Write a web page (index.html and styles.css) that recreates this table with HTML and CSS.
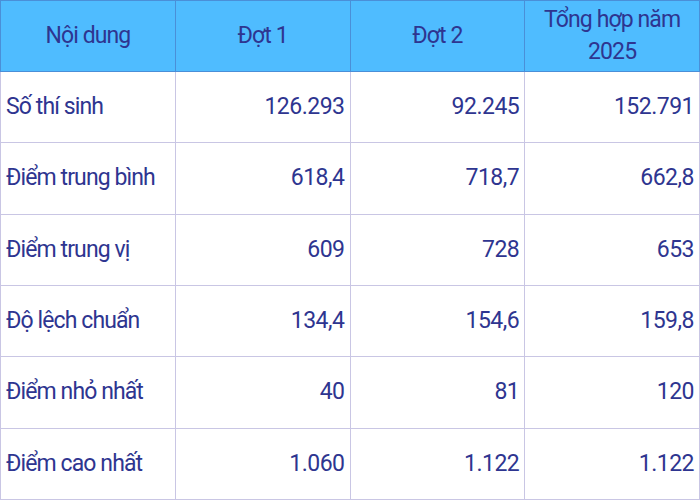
FILE: index.html
```html
<!DOCTYPE html>
<html lang="vi">
<head>
<meta charset="utf-8">
<link rel="stylesheet" href="styles.css">
</head>
<body>
<table class="stats">
  <thead>
    <tr>
      <th>Nội dung</th>
      <th>Đợt 1</th>
      <th>Đợt 2</th>
      <th>Tổng hợp năm<br>2025</th>
    </tr>
  </thead>
  <tbody>
    <tr><td>Số thí sinh</td><td>126.293</td><td>92.245</td><td>152.791</td></tr>
    <tr><td>Điểm trung bình</td><td>618,4</td><td>718,7</td><td>662,8</td></tr>
    <tr><td>Điểm trung vị</td><td>609</td><td>728</td><td>653</td></tr>
    <tr><td>Độ lệch chuẩn</td><td>134,4</td><td>154,6</td><td>159,8</td></tr>
    <tr><td>Điểm nhỏ nhất</td><td>40</td><td>81</td><td>120</td></tr>
    <tr><td>Điểm cao nhất</td><td>1.060</td><td>1.122</td><td>1.122</td></tr>
  </tbody>
</table>
</body>
</html>
```
FILE: styles.css
```css
html, body {
  margin: 0;
  padding: 0;
  background: #ffffff;
}
.stats {
  width: 700px;
  height: 500px;
  border-collapse: collapse;
  table-layout: fixed;
  font-family: Roboto, "Liberation Sans", sans-serif;
  font-size: 23px;
  letter-spacing: -0.9px;
  color: #2e3590;
}
.stats th, .stats td {
  border: 1px solid #c9c6e4;
  padding: 0 5px;
  height: 70px;
  line-height: 30px;
}
.stats th {
  background: #4fbcff;
  border-color: #4a8fd8;
  font-weight: 400;
  text-align: center;
  line-height: 32px;
}
.stats td {
  text-align: right;
  letter-spacing: -0.5px;
}
.stats td:first-child {
  text-align: left;
  letter-spacing: -0.9px;
}
```
